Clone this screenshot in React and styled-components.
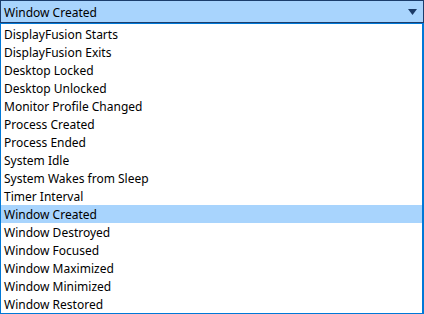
import React from "react";
import styled, { createGlobalStyle } from "styled-components";

const Global = createGlobalStyle`
  html, body { margin: 0; padding: 0; background: #ffffff; }
  body { font-family: "Noto Sans", "Open Sans", sans-serif; }
`;

const Combo = styled.div`
  width: 424px;
  height: 314px;
  display: flex;
  flex-direction: column;
  box-sizing: border-box;
`;

const Header = styled.div`
  height: 23px;
  box-sizing: border-box;
  border: 1px solid #1b3d6c;
  background: #a8d4fd;
  display: flex;
  align-items: center;
  justify-content: space-between;
  padding: 1px 6px 0 3px;
  font-size: 12px;
  color: #000;
`;

const Arrow = styled.svg`
  width: 9px;
  height: 6px;
  display: block;
`;

const List = styled.div`
  flex: 1;
  box-sizing: border-box;
  border-left: 1px solid #0078d7;
  border-right: 2px solid #0078d7;
  border-bottom: 1px solid #0078d7;
  border-top: 1px solid #0078d7;
  padding-top: 1px;
  display: flex;
  flex-direction: column;
  background: #fff;
`;

const Item = styled.div`
  height: 18px;
  line-height: 19px;
  padding-left: 3px;
  font-size: 12px;
  color: #000;
  white-space: nowrap;
  background: ${(p) => (p.$selected ? "#a8d4fd" : "transparent")};
`;

const items = [
  "DisplayFusion Starts",
  "DisplayFusion Exits",
  "Desktop Locked",
  "Desktop Unlocked",
  "Monitor Profile Changed",
  "Process Created",
  "Process Ended",
  "System Idle",
  "System Wakes from Sleep",
  "Timer Interval",
  "Window Created",
  "Window Destroyed",
  "Window Focused",
  "Window Maximized",
  "Window Minimized",
  "Window Restored",
];

export default function App() {
  const selected = "Window Created";
  return (
    <>
      <Global />
      <Combo>
        <Header>
          <span>{selected}</span>
          <Arrow viewBox="0 0 9 6">
            <polygon points="0,0 9,0 4.5,6" fill="#1b3a66" />
          </Arrow>
        </Header>
        <List>
          {items.map((it) => (
            <Item key={it} $selected={it === selected}>
              {it}
            </Item>
          ))}
        </List>
      </Combo>
    </>
  );
}
